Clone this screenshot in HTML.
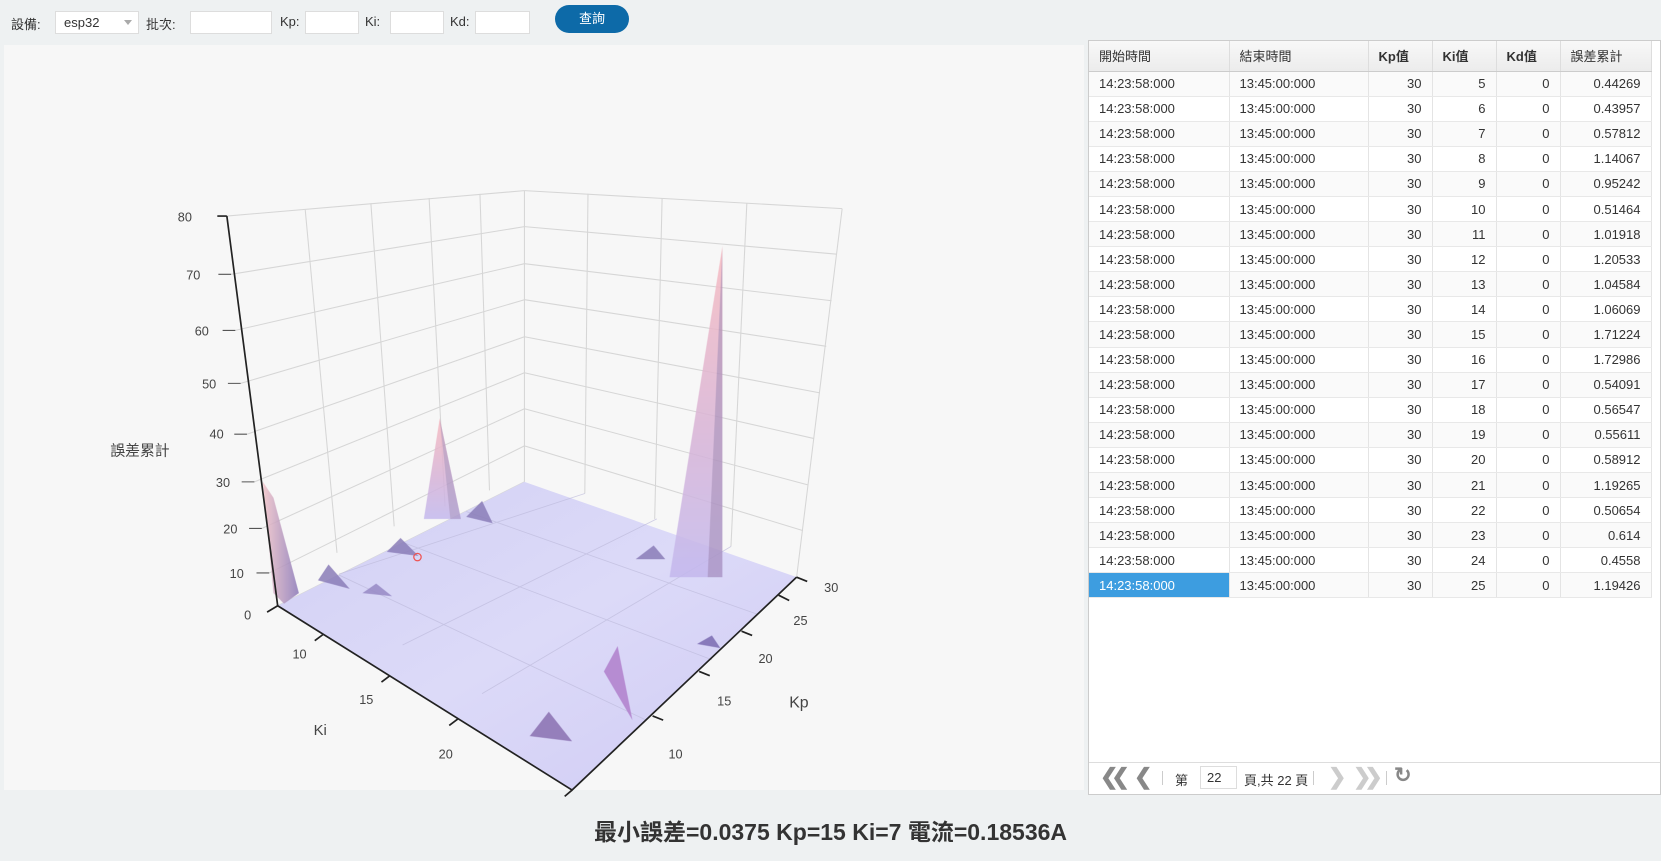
<!DOCTYPE html>
<html><head><meta charset="utf-8">
<style>
*{margin:0;padding:0;box-sizing:border-box}
body{width:1661px;height:861px;background:#eef1f2;font-family:"Liberation Sans","Noto Sans CJK TC",sans-serif;font-size:13px;color:#333;position:relative;overflow:hidden}
.a{position:absolute}
.inp{position:absolute;top:11px;height:23px;background:#fff;border:1px solid #ddd}
.lbl{position:absolute;top:14px;font-size:13px;color:#333}
#chart{position:absolute;left:4px;top:45px;width:1080px;height:745px;background:#f7f7f7}
#tbl{position:absolute;left:1088px;top:40px;width:573px;height:755px;background:#fff;border:1px solid #ccc}
table{border-collapse:collapse;width:562px;table-layout:fixed}
th{height:30px;background:linear-gradient(#f8f8f8,#ececec);border-right:1px solid #ddd;border-bottom:1px solid #ccc;font-weight:normal;text-align:left;padding-left:10px;font-size:13px}
th.b{font-weight:bold}
td{height:25.1px;border-right:1px solid #e4e4e4;border-bottom:1px solid #e8e8e8;padding:0 10px;font-size:13px;white-space:nowrap}
td.r{text-align:right}
tr:nth-child(even) td{background:#fafafa}
td.sel{background:#3d9de0!important;color:#fff}
#pager{position:absolute;left:0;right:0;bottom:0;height:32px;border-top:1px solid #ddd;background:#fff}
</style></head><body>
<div class="lbl" style="left:11px">設備:</div>
<div class="inp" style="left:55px;width:84px;padding:3px 8px;font-size:13px">esp32<span style="position:absolute;right:6px;top:8px;border:4px solid transparent;border-top:5px solid #aaa"></span></div>
<div class="lbl" style="left:146px">批次:</div>
<div class="inp" style="left:190px;width:82px"></div>
<div class="lbl" style="left:280px">Kp:</div>
<div class="inp" style="left:305px;width:54px"></div>
<div class="lbl" style="left:365px">Ki:</div>
<div class="inp" style="left:390px;width:54px"></div>
<div class="lbl" style="left:450px">Kd:</div>
<div class="inp" style="left:475px;width:55px"></div>
<div class="a" style="left:555px;top:5px;width:74px;height:28px;border-radius:14px;background:#0d6aa8;color:#fff;text-align:center;line-height:28px;font-size:13px">查詢</div>

<div id="chart"></div>
<svg class="a" style="left:0;top:0" width="1661" height="861" viewBox="0 0 1568 813">
<defs>
<linearGradient id="sp" x1="0" y1="0" x2="0" y2="1"><stop offset="0" stop-color="#f7b9bf"/><stop offset="0.6" stop-color="#d6b3d8"/><stop offset="1" stop-color="#c3b8ee"/></linearGradient>
<linearGradient id="sp2" x1="0" y1="0" x2="1" y2="0"><stop offset="0" stop-color="#f2c3c8"/><stop offset="1" stop-color="#8a78b8"/></linearGradient>
<linearGradient id="fl" x1="0" y1="0" x2="1" y2="1"><stop offset="0" stop-color="#d2d0f4"/><stop offset="0.5" stop-color="#dcdaf8"/><stop offset="1" stop-color="#cfcaf4"/></linearGradient>
</defs>
<g stroke="#d6d6d6" stroke-width="1" fill="none">
<path d="M214,204 L495,180 M218,259 L495,214 M222,312 L495,249 M227,362 L495,283 M233,410 L495,318 M240,455 L495,352 M247,499 L495,386 M254,541 L495,421 M262,572 L495,455"/>
<path d="M495,180 L795,197 M495,214 L790,240 M495,249 L785,284 M495,283 L780,327 M495,318 L774,371 M495,352 L768,414 M495,386 L763,458 M495,421 L758,501"/>
<path d="M288,198 L318,522 M350,192 L372,497 M405,187 L420,478 M453,183 L462,463 M495,180 L495,455 M555,183 L552,466 M625,187 L618,490 M705,192 L690,516 M795,197 L752,545"/>
</g>
<polygon points="495,455 262,572 540,746 752,545" fill="url(#fl)"/>
<g stroke="#bdbadc" stroke-width="0.8" fill="none" opacity="0.7">
<path d="M320,543 L610,680 M380,512 L672,623 M440,483 L715,580 M320,542 L552,466 M380,609 L620,490 M455,655 L690,516"/>
</g>
<g opacity="0.85">
<polygon points="248,455 258,470 282,560 268,570 258,560" fill="url(#sp2)"/>
<polygon points="300,548 310,533 330,556" fill="#8a7cb8"/>
<polygon points="365,521 378,508 395,525" fill="#8a7cb8"/>
<polygon points="342,560 355,551 370,563" fill="#9688c4"/>
<polygon points="440,488 455,473 465,494" fill="#8a7cb8"/>
<polygon points="415,395 400,490 435,490" fill="url(#sp)"/>
<polygon points="415,395 425,490 435,490" fill="#a08ab8" opacity="0.6"/>
<polygon points="682,232 632,545 650,545 682,545" fill="url(#sp)"/>
<polygon points="682,232 668,545 682,545" fill="#9a7fae" opacity="0.6"/>
<polygon points="600,528 617,515 628,528" fill="#8a7cb8"/>
<polygon points="570,634 583,610 597,680" fill="#b07fcc"/>
<polygon points="500,695 518,672 540,700" fill="#8a70b0"/>
<polygon points="658,608 672,600 680,612" fill="#7a6ab0"/>
</g>
<circle cx="394" cy="526" r="3.5" fill="none" stroke="#e55" stroke-width="1.2"/>
<g stroke="#222" stroke-width="1.6" fill="none">
<path d="M214,204 L262,572 M205,204 L214,204 M262,572 L540,746 L752,545"/>
<path d="M262,572 L252,578 M305,599 L297,605 M368,638 L360,644 M432,679 L424,685 M540,746 L533,752 M752,545 L762,549 M735,562 L745,567 M700,596 L710,600 M660,634 L670,638 M616,676 L626,680"/>
</g>
<g stroke="#555" stroke-width="1"><path d="M206,259 L218,259 M210,312 L222,312 M215,362 L227,362 M221,410 L233,410 M228,455 L240,455 M235,499 L247,499 M242,541 L254,541"/></g>
<g font-family="Liberation Sans,sans-serif" font-size="12" fill="#444" text-anchor="end">
<text x="181" y="209">80</text><text x="189" y="264">70</text><text x="197" y="317">60</text><text x="204" y="367">50</text><text x="211" y="414">40</text><text x="217" y="460">30</text><text x="224" y="504">20</text><text x="230" y="546">10</text><text x="237" y="585">0</text>
</g>
<g font-family="Liberation Sans,sans-serif" font-size="12" fill="#444">
<text x="276" y="622">10</text><text x="339" y="665">15</text><text x="414" y="716">20</text>
<text x="778" y="559">30</text><text x="749" y="590">25</text><text x="716" y="626">20</text><text x="677" y="666">15</text><text x="631" y="716">10</text>
</g>
<text x="104" y="430" font-family="Liberation Sans,'Noto Sans CJK TC',sans-serif" font-size="14" fill="#444">誤差累計</text>
<text x="296" y="694" font-family="Liberation Sans,sans-serif" font-size="14" fill="#444">Ki</text>
<text x="745" y="668" font-family="Liberation Sans,sans-serif" font-size="15" fill="#444">Kp</text>
</svg>

<div id="tbl">
<table>
<colgroup><col style="width:140px"><col style="width:139px"><col style="width:64px"><col style="width:64px"><col style="width:64px"><col style="width:91px"></colgroup>
<tr><th>開始時間</th><th>結束時間</th><th class="b">Kp值</th><th class="b">Ki值</th><th class="b">Kd值</th><th>誤差累計</th></tr>
<tr><td>14:23:58:000</td><td>13:45:00:000</td><td class="r">30</td><td class="r">5</td><td class="r">0</td><td class="r">0.44269</td></tr>
<tr><td>14:23:58:000</td><td>13:45:00:000</td><td class="r">30</td><td class="r">6</td><td class="r">0</td><td class="r">0.43957</td></tr>
<tr><td>14:23:58:000</td><td>13:45:00:000</td><td class="r">30</td><td class="r">7</td><td class="r">0</td><td class="r">0.57812</td></tr>
<tr><td>14:23:58:000</td><td>13:45:00:000</td><td class="r">30</td><td class="r">8</td><td class="r">0</td><td class="r">1.14067</td></tr>
<tr><td>14:23:58:000</td><td>13:45:00:000</td><td class="r">30</td><td class="r">9</td><td class="r">0</td><td class="r">0.95242</td></tr>
<tr><td>14:23:58:000</td><td>13:45:00:000</td><td class="r">30</td><td class="r">10</td><td class="r">0</td><td class="r">0.51464</td></tr>
<tr><td>14:23:58:000</td><td>13:45:00:000</td><td class="r">30</td><td class="r">11</td><td class="r">0</td><td class="r">1.01918</td></tr>
<tr><td>14:23:58:000</td><td>13:45:00:000</td><td class="r">30</td><td class="r">12</td><td class="r">0</td><td class="r">1.20533</td></tr>
<tr><td>14:23:58:000</td><td>13:45:00:000</td><td class="r">30</td><td class="r">13</td><td class="r">0</td><td class="r">1.04584</td></tr>
<tr><td>14:23:58:000</td><td>13:45:00:000</td><td class="r">30</td><td class="r">14</td><td class="r">0</td><td class="r">1.06069</td></tr>
<tr><td>14:23:58:000</td><td>13:45:00:000</td><td class="r">30</td><td class="r">15</td><td class="r">0</td><td class="r">1.71224</td></tr>
<tr><td>14:23:58:000</td><td>13:45:00:000</td><td class="r">30</td><td class="r">16</td><td class="r">0</td><td class="r">1.72986</td></tr>
<tr><td>14:23:58:000</td><td>13:45:00:000</td><td class="r">30</td><td class="r">17</td><td class="r">0</td><td class="r">0.54091</td></tr>
<tr><td>14:23:58:000</td><td>13:45:00:000</td><td class="r">30</td><td class="r">18</td><td class="r">0</td><td class="r">0.56547</td></tr>
<tr><td>14:23:58:000</td><td>13:45:00:000</td><td class="r">30</td><td class="r">19</td><td class="r">0</td><td class="r">0.55611</td></tr>
<tr><td>14:23:58:000</td><td>13:45:00:000</td><td class="r">30</td><td class="r">20</td><td class="r">0</td><td class="r">0.58912</td></tr>
<tr><td>14:23:58:000</td><td>13:45:00:000</td><td class="r">30</td><td class="r">21</td><td class="r">0</td><td class="r">1.19265</td></tr>
<tr><td>14:23:58:000</td><td>13:45:00:000</td><td class="r">30</td><td class="r">22</td><td class="r">0</td><td class="r">0.50654</td></tr>
<tr><td>14:23:58:000</td><td>13:45:00:000</td><td class="r">30</td><td class="r">23</td><td class="r">0</td><td class="r">0.614</td></tr>
<tr><td>14:23:58:000</td><td>13:45:00:000</td><td class="r">30</td><td class="r">24</td><td class="r">0</td><td class="r">0.4558</td></tr>
<tr><td class="sel">14:23:58:000</td><td>13:45:00:000</td><td class="r">30</td><td class="r">25</td><td class="r">0</td><td class="r">1.19426</td></tr>
</table>
<div id="pager">
<span class="a" style="left:11px;top:1px;font-size:22px;color:#888;font-weight:bold;letter-spacing:-7px">❮❮</span>
<span class="a" style="left:45px;top:1px;font-size:22px;color:#888;font-weight:bold">❮</span>
<span class="a" style="left:73px;top:8px;width:1px;height:14px;background:#ccc"></span>
<span class="a" style="left:86px;top:7px">第</span>
<span class="a" style="left:111px;top:3px;width:37px;height:23px;border:1px solid #ddd;padding:3px 6px">22</span>
<span class="a" style="left:155px;top:7px">頁,共 22 頁</span>
<span class="a" style="left:224px;top:8px;width:1px;height:14px;background:#ccc"></span>
<span class="a" style="left:239px;top:1px;font-size:22px;color:#ccc;font-weight:bold">❯</span>
<span class="a" style="left:264px;top:1px;font-size:22px;color:#ccc;font-weight:bold;letter-spacing:-7px">❯❯</span>
<span class="a" style="left:297px;top:8px;width:1px;height:14px;background:#ccc"></span>
<span class="a" style="left:305px;top:0px;font-size:21px;color:#888;font-weight:bold">↻</span>
</div>
</div>

<div class="a" style="left:0;width:1661px;top:813px;text-align:center;font-size:23px;font-weight:bold;color:#333">最小誤差=0.0375 Kp=15 Ki=7 電流=0.18536A</div>
</body></html>
